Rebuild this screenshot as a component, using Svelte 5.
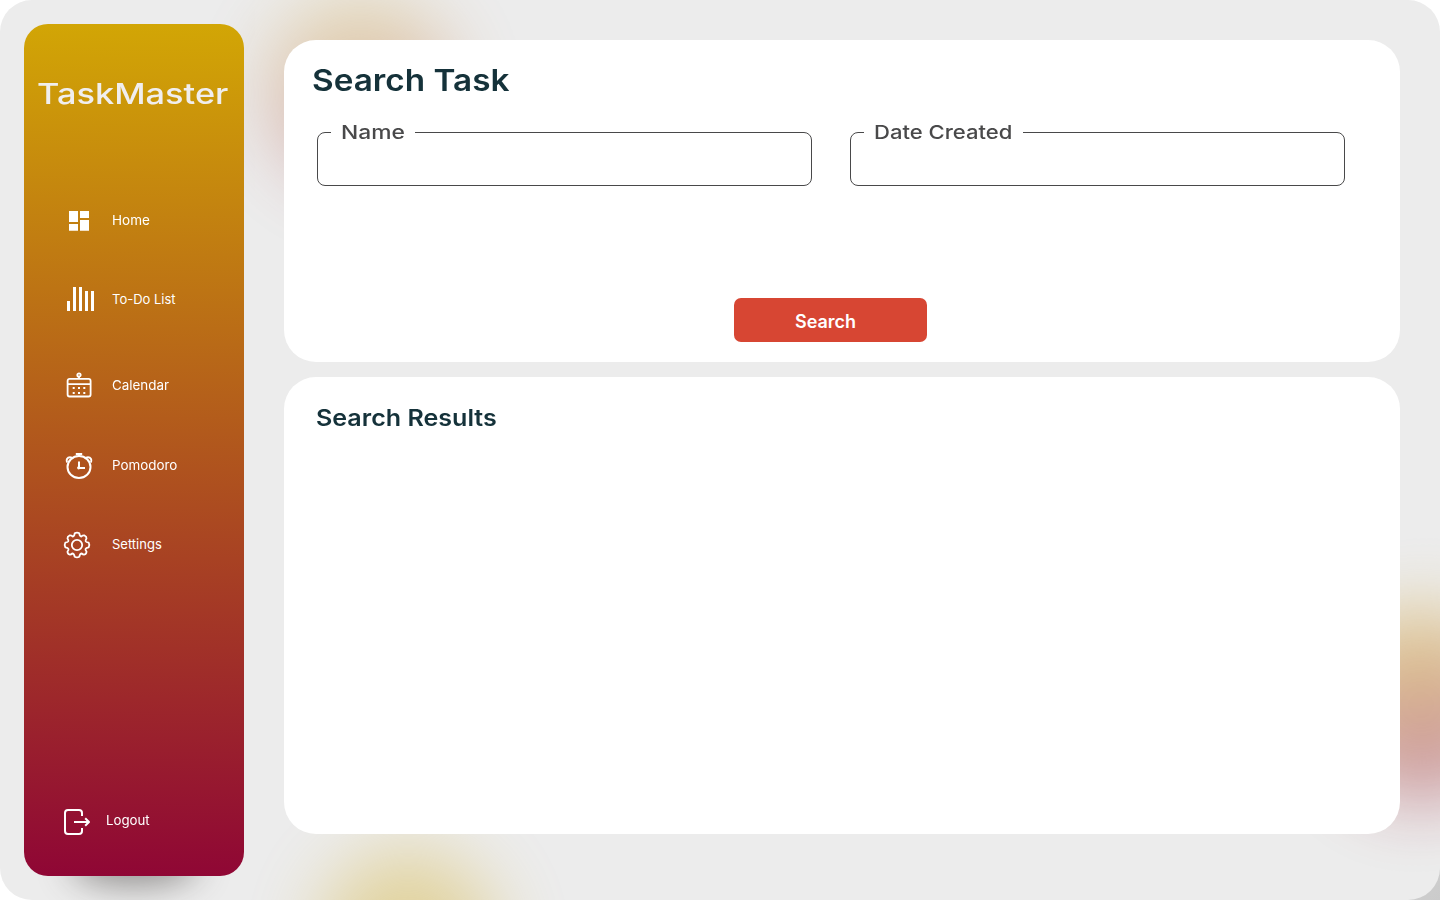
<script>
  const nav = [
    { id: 'home', label: 'Home', w: 1.04 },
    { id: 'todo', label: 'To-Do List', w: 1.0 },
    { id: 'calendar', label: 'Calendar', w: 1.03 },
    { id: 'pomodoro', label: 'Pomodoro', w: 1.03 },
    { id: 'settings', label: 'Settings', w: 1.0 }
  ];
  const fields = [
    { id: 'name', label: 'Name', gap: 84, w: 1.2 },
    { id: 'date', label: 'Date Created', gap: 159, w: 1.16 }
  ];
</script>

<div class="frame">
  <div class="blob one"></div>
  <div class="blob two"></div>
  <div class="blob three"></div>
  <div class="glow"></div>

  <aside>
    <h1><span class="wide">TaskMaster</span></h1>
    <nav>
      {#each nav as item (item.id)}
        <a class={item.id} href="#{item.id}">
          <svg width="30" height="30" viewBox="0 0 30 30" fill="none" stroke="#fff" stroke-width="2">
            {#if item.id === 'home'}
              <path fill="#fff" stroke="none" d="M7 6h9v11H7zM18 6h9v7h-9zM7 19h9v6.800H7zM18 15h9v10.800h-9z" />
            {:else if item.id === 'todo'}
              <path fill="#fff" stroke="none" d="M5 17h3v10H5zM11 3h3v24h-3zM17 3h3v24h-3zM23 7h3v20h-3zM29 7h3v20h-3z" />
            {:else if item.id === 'calendar'}
              <rect x="5.600" y="8.900" width="23" height="17.600" rx="2" stroke-width="1.800" />
              <path d="M5 14.200h24M17 6.500v2.500" stroke-width="1.800" />
              <circle cx="17" cy="5" r="1.700" stroke-width="1.800" />
              <path fill="#fff" stroke="none" d="M10.700 17h2v2h-2zM16 17h2v2h-2zM21.300 17h2v2h-2zM10.700 22h2v2h-2zM16 22h2v2h-2zM21.300 22h2v2h-2z" />
            {:else if item.id === 'pomodoro'}
              <ellipse cx="17" cy="17" rx="11.500" ry="11" />
              <path d="M13.800 4h6.400M17 4v3M17 11.500v6.500h6" />
              <circle cx="16.700" cy="17.800" r="1.600" fill="#fff" stroke="none" />
              <path d="M5 12.500C3.800 9.500 5.500 7.200 8 7.200c1.500 0 2.400.500 3.200 1.300M29 12.500c1.200-3-.500-5.300-3-5.300-1.500 0-2.400.500-3.200 1.300" />
            {:else}
              <g transform="translate(0 1)" stroke-width="1.800" stroke-linejoin="round">
                <circle cx="15" cy="15" r="5.200" />
                <path d="M12.700 3.300Q15 2 17.300 3.300Q17.700 6.300 19.200 6.500Q21 5.200 22.500 5.500Q24.700 6.500 24.500 8.500Q23.200 10.300 23.700 11.400Q24.300 12.400 26.700 12.700Q28 15 26.700 17.300Q24 17.700 23.500 19Q23.200 20 24.500 21.500Q24.500 24 22.500 24.500Q21 24.800 19.700 23.500Q18 23.500 17.300 26.700Q15 28 12.700 26.700Q12 23.500 10.300 23.500Q9 24.800 7.500 24.500Q5.500 24 5.500 21.500Q6.800 20 6.500 19Q6 17.700 3.300 17.300Q2 15 3.300 12.700Q5.700 12.400 6.300 11.400Q6.800 10.300 5.500 8.500Q5.300 6.500 7.500 5.500Q9 5.200 10.800 6.500Q12.300 6.300 12.700 3.300Z" />
              </g>
            {/if}
          </svg>
          <span class="label" style="transform: scaleX({item.w})">{item.label}</span>
        </a>
      {/each}
    </nav>
    <a class="logout" href="#logout">
      <svg width="30" height="30" viewBox="0 0 30 30" fill="none" stroke="#fff" stroke-width="2">
        <path d="M20 9V6q0-3-3-3H6Q3 3 3 6v18q0 3 3 3h11q3 0 3-3v-3M12 15h15M23.200 11.200L27 15l-3.800 3.800" stroke-linejoin="round" />
      </svg>
      <span class="label">Logout</span>
    </a>
  </aside>

  <main>
    <section class="search">
      <h2><span class="wide">Search Task</span></h2>
      <div class="fields">
        {#each fields as f (f.id)}
          <fieldset>
            <legend style="width: {f.gap}px"><span class="wide" style="transform: scaleX({f.w})">{f.label}</span></legend>
          </fieldset>
        {/each}
      </div>
      <button type="button">Search</button>
    </section>
    <section class="results">
      <h3><span class="wide">Search Results</span></h3>
    </section>
  </main>
</div>

<style>
  :global(body) {
    margin: 0;
    background: linear-gradient(135deg, #fff 65%, #cbcbcb 100%);
  }
  .frame {
    position: relative;
    box-sizing: border-box;
    width: 1440px;
    height: 900px;
    border-radius: 32px;
    overflow: hidden;
    background: #ececec;
    display: flex;
    font-family: Inter, sans-serif;
  }
  .wide {
    display: inline-block;
    transform-origin: 0 50%;
    white-space: nowrap;
  }
  .blob {
    position: absolute;
    width: 190px;
    height: 190px;
    border-radius: 50%;
    background: linear-gradient(180deg, #d2a605, #b5521c 50%, #8f0635);
    filter: blur(36px);
  }
  .one { left: 266px; top: -2px; transform: rotate(-8deg); opacity: 0.28; }
  .two { left: 1326px; top: 610px; transform: rotate(-8deg); opacity: 0.42; background: linear-gradient(180deg, #d2a605, #b5521c 52%, #8f0635); }
  .three { left: 318px; top: 850px; width: 180px; opacity: 0.34; background: linear-gradient(180deg, #d2a605, #caa00a 60%, #b5521c); }
  .glow {
    position: absolute;
    left: 69px;
    top: 840px;
    width: 130px;
    height: 46px;
    border-radius: 50%;
    background: #3b3735;
    filter: blur(17px);
    opacity: 0.5;
  }
  aside {
    position: relative;
    box-sizing: border-box;
    width: 220px;
    height: 852px;
    margin: 24px 0 0 24px;
    padding-top: 51px;
    border-radius: 24px;
    background: linear-gradient(181deg, #d2a605, #8f0635);
    display: flex;
    flex-direction: column;
  }
  h1 {
    margin: 0 0 0 13px;
    font-size: 29px;
    line-height: 38px;
    font-weight: 500;
    color: #f0eeee;
  }
  h1 .wide { transform: scaleX(1.185); }
  nav {
    display: flex;
    flex-direction: column;
    padding-top: 92px;
  }
  a {
    display: flex;
    align-items: center;
    height: 30px;
    margin-left: 38px;
    color: #fff;
    text-decoration: none;
    font-size: 13px;
    gap: 20px;
  }
  svg { flex: none; overflow: visible; }
  .label { transform-origin: 0 50%; white-space: nowrap; }
  .todo { margin-top: 49px; }
  .calendar { margin-top: 56px; }
  .pomodoro { margin-top: 50px; }
  .settings { margin-top: 49px; }
  .logout {
    gap: 14px;
    margin-top: auto;
    margin-bottom: 41px;
  }
  .logout svg { margin-top: 4px; }
  .logout .label { transform: scaleX(1.02); }
  main {
    position: relative;
    width: 1116px;
    margin: 40px 0 0 40px;
    display: flex;
    flex-direction: column;
    gap: 15px;
  }
  section {
    box-sizing: border-box;
    background: #fff;
    border-radius: 32px;
    display: flex;
    flex-direction: column;
  }
  .search { height: 322px; padding-top: 20px; }
  .results { height: 457px; padding-top: 24px; }
  h2, h3 { margin: 0; color: #15323a; font-weight: 600; }
  h2 { font-size: 30px; line-height: 40px; padding-left: 28px; }
  h2 .wide { transform: scaleX(1.11); }
  h3 { font-size: 23px; line-height: 34px; padding-left: 32px; }
  h3 .wide { transform: scaleX(1.09); }
  .fields {
    display: flex;
    gap: 38px;
    margin: 22px 0 0 33px;
  }
  fieldset {
    box-sizing: border-box;
    width: 495px;
    height: 64px;
    min-width: 0;
    margin: 0;
    padding: 0 13px;
    border: 1px solid #49494a;
    border-radius: 8px;
  }
  legend {
    box-sizing: border-box;
    height: 21px;
    padding: 0 0 0 10px;
    font-size: 19px;
    line-height: 21px;
    font-weight: 500;
    color: #49494a;
  }
  button {
    width: 193px;
    height: 44px;
    margin: 112px 0 0 450px;
    padding: 4px 10px 0 0;
    border: 0;
    border-radius: 7px;
    background: #d74633;
    color: #fff;
    font: 600 18px/22px Inter, sans-serif;
  }
</style>
